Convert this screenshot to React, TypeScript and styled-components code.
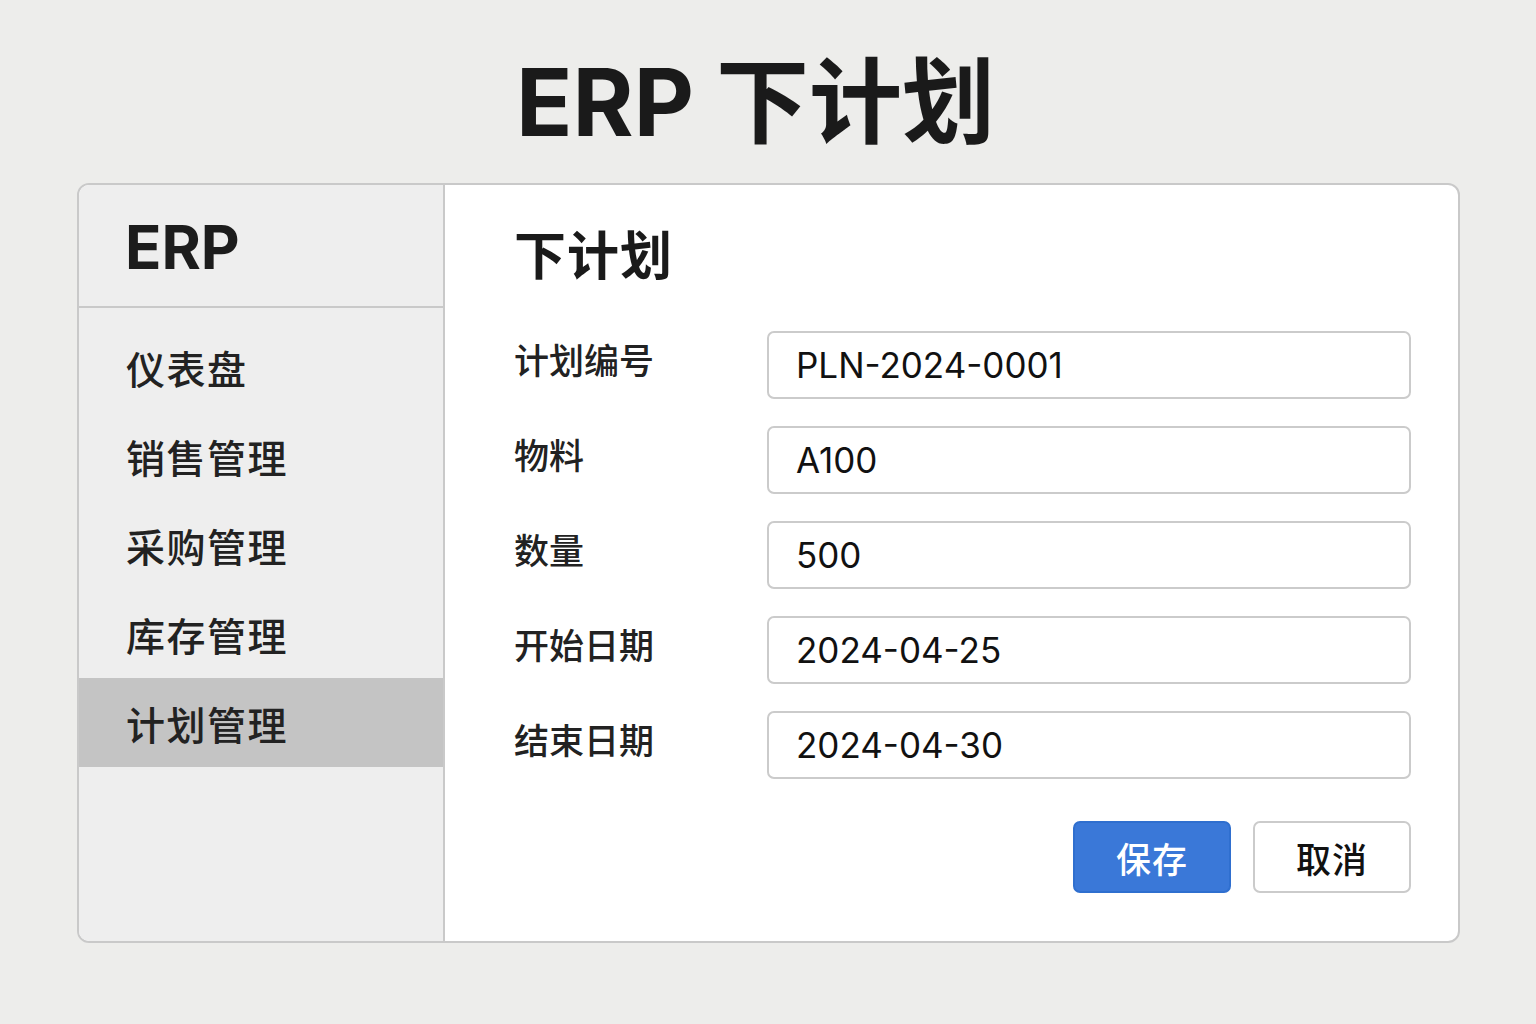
import * as React from 'react';
import styled, { createGlobalStyle } from 'styled-components';

const GlobalStyle = createGlobalStyle`
  html, body {
    margin: 0;
    padding: 0;
    background: #ededeb;
  }
  body {
    font-family: Inter, "Noto Sans CJK SC", sans-serif;
    color: #1c1c1c;
  }
`;

const Page = styled.div`
  width: 1536px;
  height: 1024px;
  box-sizing: border-box;
  padding: 40px 76px 0 77px;
  display: flex;
  flex-direction: column;
`;

const PageTitle = styled.h1`
  margin: 0;
  height: 143px;
  padding-right: 26px;
  text-align: center;
  font-size: 93px;
  font-weight: 700;
  line-height: 124px;
  color: #1a1a1a;
`;

const Card = styled.div`
  height: 756px;
  display: flex;
  border: 2px solid #c9c9c9;
  border-radius: 12px;
  background: #ffffff;
  overflow: hidden;
`;

const Sidebar = styled.nav`
  width: 364px;
  flex-shrink: 0;
  background: #eeeeee;
  border-right: 2px solid #c9c9c9;
  display: flex;
  flex-direction: column;
`;

const Brand = styled.div`
  height: 123px;
  box-sizing: border-box;
  border-bottom: 2px solid #c9c9c9;
  padding: 26px 0 0 46px;
  font-size: 60px;
  font-weight: 700;
  line-height: 72px;
  color: #1c1c1c;
`;

const Menu = styled.ul`
  list-style: none;
  margin: 0;
  padding: 14px 0 0;
`;

const MenuItem = styled.li<{ $active?: boolean }>`
  height: 89px;
  display: flex;
  align-items: center;
  padding-left: 47px;
  font-size: 39px;
  font-weight: 500;
  letter-spacing: 1.5px;
  color: #222222;
  background: ${(p) => (p.$active ? '#c4c4c4' : 'transparent')};
`;

const Main = styled.main`
  flex: 1;
  padding: 40px 47px 0 69px;
  display: flex;
  flex-direction: column;
`;

const Heading = styled.h2`
  margin: 0 0 42px;
  font-size: 52px;
  font-weight: 700;
  line-height: 64px;
  letter-spacing: 1px;
  color: #1a1a1a;
`;

const Form = styled.div`
  display: grid;
  grid-template-columns: 253px 1fr;
  row-gap: 27px;
  align-items: center;
`;

const Label = styled.label`
  font-size: 35px;
  font-weight: 500;
  color: #222222;
  line-height: 48px;
  margin-top: -8px;
`;

const Field = styled.div`
  height: 68px;
  box-sizing: border-box;
  border: 2px solid #cbcbcb;
  border-radius: 7px;
  padding-left: 27px;
  display: flex;
  align-items: center;
  font-size: 35px;
  color: #111111;
  background: #ffffff;
`;

const Actions = styled.div`
  display: flex;
  justify-content: flex-end;
  gap: 22px;
  margin-top: 42px;
`;

const Button = styled.button<{ $primary?: boolean }>`
  width: 158px;
  height: 72px;
  box-sizing: border-box;
  border-radius: 7px;
  border: 2px solid ${(p) => (p.$primary ? '#2f6fcf' : '#cbcbcb')};
  background: ${(p) => (p.$primary ? '#3a78d8' : '#ffffff')};
  color: ${(p) => (p.$primary ? '#ffffff' : '#111111')};
  font-family: inherit;
  font-size: 35px;
  font-weight: 500;
  letter-spacing: 1px;
  cursor: pointer;
`;

const menu = ['仪表盘', '销售管理', '采购管理', '库存管理', '计划管理'];

const fields = [
  { label: '计划编号', value: 'PLN-2024-0001' },
  { label: '物料', value: 'A100' },
  { label: '数量', value: '500' },
  { label: '开始日期', value: '2024-04-25' },
  { label: '结束日期', value: '2024-04-30' },
];

const App: React.FunctionComponent = () => {
  return (
    <>
      <GlobalStyle />
      <Page>
        <PageTitle>ERP 下计划</PageTitle>
        <Card>
          <Sidebar>
            <Brand>ERP</Brand>
            <Menu>
              {menu.map((item) => (
                <MenuItem key={item} $active={item === '计划管理'}>
                  {item}
                </MenuItem>
              ))}
            </Menu>
          </Sidebar>
          <Main>
            <Heading>下计划</Heading>
            <Form>
              {fields.map((f) => (
                <React.Fragment key={f.label}>
                  <Label>{f.label}</Label>
                  <Field>{f.value}</Field>
                </React.Fragment>
              ))}
            </Form>
            <Actions>
              <Button $primary>保存</Button>
              <Button>取消</Button>
            </Actions>
          </Main>
        </Card>
      </Page>
    </>
  );
};

export default App;
